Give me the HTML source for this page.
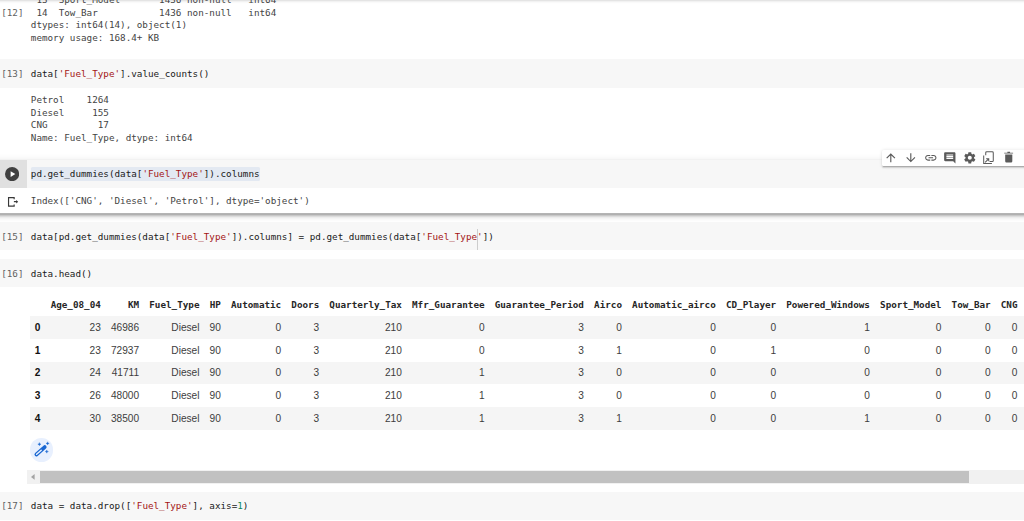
<!DOCTYPE html>
<html lang="en">
<head>
<meta charset="utf-8">
<title>Colab notebook</title>
<style>
html,body{margin:0;padding:0;}
body{width:1024px;height:521px;overflow:hidden;background:#fff;position:relative;
  font-family:"DejaVu Sans Mono","Liberation Mono",monospace;font-size:9.28px;line-height:13px;color:#212121;}
.abs{position:absolute;}
.l{position:absolute;left:30.8px;white-space:pre;color:#444;height:13px;}
.codebg{position:absolute;left:0;width:1024px;height:28.6px;background:#f7f7f7;}
.num{position:absolute;left:1.2px;color:#616161;white-space:pre;}
.code{position:absolute;left:30.8px;white-space:pre;color:#1a1a1a;}
.out{position:absolute;left:30.8px;color:#2a2a2a;}
.s{color:#a31515;}
.n{color:#09885a;}
.topshadow{position:absolute;left:0;top:0;width:1024px;height:4px;background:linear-gradient(to bottom,rgb(228,228,228) .5px,rgb(242,242,242) 1.5px,rgb(250,250,250) 2.5px,rgb(254,254,254) 3.5px,#fff 4px);}
/* focused cell */
.focus{position:absolute;left:0;top:160px;width:1024px;height:53px;}
.focusbg{position:absolute;left:0;top:160px;width:1024px;height:53px;background:#fff;}
.fsb{position:absolute;left:0;top:213px;width:1024px;height:10px;background:linear-gradient(to bottom,rgb(180,180,180) 0.5px,rgb(176,176,176) 1.5px,rgb(200,200,200) 2.5px,rgb(220,220,220) 3.5px,rgb(236,236,236) 4.5px,rgb(244,244,244) 5.5px,rgb(249,249,249) 6.5px,rgb(252,252,252) 7.5px,rgb(254,254,254) 8.5px,rgb(255,255,255) 9.5px);}
.fst{position:absolute;left:0;top:153px;width:1024px;height:7px;background:linear-gradient(to bottom,rgb(255,255,255) 0.5px,rgb(254,254,254) 1.5px,rgb(253,253,253) 2.5px,rgb(252,252,252) 3.5px,rgb(250,250,250) 4.5px,rgb(248,248,248) 5.5px,rgb(242,242,242) 6.5px);}
.gutter{position:absolute;left:0;top:0;width:26.7px;height:27.6px;background:#e0e0e0;}
.fcode{position:absolute;left:26.7px;top:0;right:0;height:27.6px;background:#f7f7f7;}
.sel{position:absolute;left:30.9px;top:7.3px;width:228.7px;height:13.4px;background:#e3e9f2;border-radius:1.5px;}
.toolbar{position:absolute;left:882px;top:149.5px;width:176px;height:16.2px;background:#fff;border-radius:1.6px;
  box-shadow:0 1.45px 1.45px rgba(0,0,0,.12),0 2.2px .7px -1.45px rgba(0,0,0,.16),0 .7px 3.6px rgba(0,0,0,.11);}
.toolbar svg{position:absolute;top:1.3px;width:13.6px;height:13.6px;fill:#5a5a5a;}
/* table */
table{position:absolute;left:29.8px;top:293.6px;border-collapse:collapse;border-spacing:0;}
th,td{padding:5.05px 5.07px;text-align:right;white-space:nowrap;line-height:12.6px;}
thead th{font-family:"DejaVu Sans Mono","Liberation Mono",monospace;font-weight:bold;font-size:9.28px;color:#262626;}
tbody th{font-family:"Liberation Sans",sans-serif;font-weight:bold;font-size:10.14px;color:#111;}
td{font-family:"Liberation Sans",sans-serif;font-size:10.14px;color:#3d3d3d;}
tbody th,tbody td{padding-top:5.75px;padding-bottom:4.35px;}
tbody tr:nth-child(odd){background:#f5f5f5;}
.wand{position:absolute;left:29.9px;top:438.4px;width:23.3px;height:23.3px;border-radius:50%;background:#e8f0fe;}
.track{position:absolute;left:26.9px;top:470.4px;width:1000px;height:13.2px;background:#f1f1f1;}
.thumb{position:absolute;left:40px;top:471.3px;width:929px;height:11.4px;background:#c1c1c1;}
</style>
</head>
<body>
<div class="topshadow"></div>

<!-- cell 12 output -->
<div class="num" style="top:6px">[12]</div>
<div class="l" style="top:-7px"> 13  Sport_Model       1436 non-null   int64</div>
<div class="l" style="top:6px"> 14  Tow_Bar           1436 non-null   int64</div>
<div class="l" style="top:18px">dtypes: int64(14), object(1)</div>
<div class="l" style="top:31px">memory usage: 168.4+ KB</div>

<!-- cell 13 -->
<div class="codebg" style="top:59px"></div>
<div class="num" style="top:67px">[13]</div>
<div class="code" style="top:67px">data[<span class="s">'Fuel_Type'</span>].value_counts()</div>
<div class="l" style="top:93px">Petrol    1264</div>
<div class="l" style="top:106px">Diesel     155</div>
<div class="l" style="top:118px">CNG         17</div>
<div class="l" style="top:131px">Name: Fuel_Type, dtype: int64</div>

<!-- cell 14 focused -->
<div class="fst"></div><div class="fsb"></div><div class="focusbg"></div>
<div class="focus">
  <div class="gutter"></div>
  <div class="fcode"></div>
  <div class="sel"></div>
  <svg class="abs" style="left:5px;top:6.9px;width:14.2px;height:14.2px" viewBox="0 0 24 24"><circle cx="12" cy="12" r="12" fill="#404040"/><path d="M9.5 7v10l8-5z" fill="#fff"/></svg>
  <div class="code" style="top:7px">pd.get_dummies(data[<span class="s">'Fuel_Type'</span>]).columns</div>
  <svg class="abs" style="left:0;top:30px;width:24px;height:24px" viewBox="0 0 24 24"><path d="M14.150 9.300V7.550H8.550V16.150H14.150V14.500M13.900 11.650H17" fill="none" stroke="#383838" stroke-width="1.150"/><path d="M16.200 9.900L18.200 11.650L16.200 13.400Z" fill="#383838"/></svg>
  <div class="l" style="top:34px">Index(['CNG', 'Diesel', 'Petrol'], dtype='object')</div>
</div>
<div class="toolbar">
  <svg style="left:2.2px" viewBox="0 0 24 24"><path d="M4 12l1.41 1.41L11 7.83V20h2V7.83l5.58 5.59L20 12l-8-8-8 8z"/></svg>
  <svg style="left:21.7px" viewBox="0 0 24 24"><path d="M20 12l-1.41-1.41L13 16.17V4h-2v12.17l-5.58-5.59L4 12l8 8 8-8z"/></svg>
  <svg style="left:41.6px" viewBox="0 0 24 24"><path d="M3.9 12c0-1.71 1.39-3.1 3.1-3.1h4V7H7c-2.76 0-5 2.24-5 5s2.24 5 5 5h4v-1.9H7c-1.71 0-3.1-1.39-3.1-3.1zM8 13h8v-2H8v2zm9-6h-4v1.9h4c1.71 0 3.1 1.39 3.1 3.1s-1.39 3.1-3.1 3.1h-4V17h4c2.76 0 5-2.24 5-5s-2.240-5-5-5z"/></svg>
  <svg style="left:60.8px" viewBox="0 0 24 24"><path d="M21.99 4c0-1.1-.89-2-1.990-2H4c-1.100 0-2 .9-2 2v12c0 1.100.9 2 2 2h14l4 4-.010-18zM18 14H6v-2h12v2zm0-3H6V9h12v2zm0-3H6V6h12v2z"/></svg>
  <svg style="left:80.7px" viewBox="0 0 24 24"><path d="M19.43 12.98c.04-.32.07-.64.07-.98s-.03-.66-.07-.98l2.110-1.650c.19-.15.24-.42.12-.64l-2-3.460c-.12-.22-.39-.3-.61-.22l-2.490 1c-.52-.4-1.080-.73-1.690-.98l-.38-2.650C14.460 2.180 14.250 2 14 2h-4c-.25 0-.46.180-.49.420l-.38 2.650c-.61.250-1.170.59-1.690.98l-2.490-1c-.23-.09-.49 0-.61.220l-2 3.460c-.13.220-.07.490.12.640l2.110 1.650c-.04.320-.07.650-.07.980s.03.660.07.980l-2.110 1.650c-.19.150-.24.420-.12.640l2 3.460c.12.220.39.300.61.220l2.490-1c.52.400 1.080.730 1.690.980l.38 2.650c.03.240.24.420.49.420h4c.25 0 .46-.18.49-.42l.38-2.650c.61-.25 1.170-.59 1.690-.98l2.490 1c.23.090.49 0 .61-.22l2-3.460c.12-.22.07-.49-.12-.64l-2.110-1.650zM12 15.500c-1.930 0-3.500-1.570-3.500-3.500s1.570-3.500 3.500-3.500 3.500 1.570 3.500 3.500-1.570 3.500-3.500 3.500z"/></svg>
  <svg style="left:99.8px" viewBox="0 0 24 24"><path fill="none" stroke="#5a5a5a" stroke-width="1.8" d="M6.6 7.4V3Q6.600 1.300 8.300 1.300H18.200Q19.900 1.300 19.900 3V17Q19.900 18.700 18.200 18.700H13.400M3 8.100V22.100H17.500M5.500 20L11.700 13.800M7.300 13.600H11.900V18.200"/></svg>
  <svg style="left:118.800px;top:.8px;width:14.600px;height:14.600px" viewBox="0 0 24 24"><path d="M10.500 3h4.400v1.500h-4.400zM5.300 4.400h14.600v1.400H5.300zM6.900 7.600h11.700v11q0 2-2 2h-7.700q-2 0-2-2z"/></svg>
</div>

<!-- cell 15 -->
<div class="codebg" style="top:221.8px"></div>
<div class="num" style="top:230px">[15]</div>
<div class="code" style="top:230px">data[pd.get_dummies(data[<span class="s">'Fuel_Type'</span>]).columns] = pd.get_dummies(data[<span class="s">'Fuel_Type'</span>])</div>

<div class="abs" style="left:477px;top:229.4px;width:.9px;height:20.600px;background:#cdcdcd"></div>

<!-- cell 16 -->
<div class="codebg" style="top:258.9px"></div>
<div class="num" style="top:267px">[16]</div>
<div class="code" style="top:267px">data.head()</div>

<table>
<thead><tr><th></th><th>Age_08_04</th><th>KM</th><th>Fuel_Type</th><th>HP</th><th>Automatic</th><th>Doors</th><th>Quarterly_Tax</th><th>Mfr_Guarantee</th><th>Guarantee_Period</th><th>Airco</th><th>Automatic_airco</th><th>CD_Player</th><th>Powered_Windows</th><th>Sport_Model</th><th>Tow_Bar</th><th>CNG</th><th>Diesel</th><th>Petrol</th></tr></thead>
<tbody>
<tr><th>0</th><td>23</td><td>46986</td><td>Diesel</td><td>90</td><td>0</td><td>3</td><td>210</td><td>0</td><td>3</td><td>0</td><td>0</td><td>0</td><td>1</td><td>0</td><td>0</td><td>0</td><td>1</td><td>0</td></tr>
<tr><th>1</th><td>23</td><td>72937</td><td>Diesel</td><td>90</td><td>0</td><td>3</td><td>210</td><td>0</td><td>3</td><td>1</td><td>0</td><td>1</td><td>0</td><td>0</td><td>0</td><td>0</td><td>1</td><td>0</td></tr>
<tr><th>2</th><td>24</td><td>41711</td><td>Diesel</td><td>90</td><td>0</td><td>3</td><td>210</td><td>1</td><td>3</td><td>0</td><td>0</td><td>0</td><td>0</td><td>0</td><td>0</td><td>0</td><td>1</td><td>0</td></tr>
<tr><th>3</th><td>26</td><td>48000</td><td>Diesel</td><td>90</td><td>0</td><td>3</td><td>210</td><td>1</td><td>3</td><td>0</td><td>0</td><td>0</td><td>0</td><td>0</td><td>0</td><td>0</td><td>1</td><td>0</td></tr>
<tr><th>4</th><td>30</td><td>38500</td><td>Diesel</td><td>90</td><td>0</td><td>3</td><td>210</td><td>1</td><td>3</td><td>1</td><td>0</td><td>0</td><td>1</td><td>0</td><td>0</td><td>0</td><td>1</td><td>0</td></tr>
</tbody>
</table>

<div class="wand"></div>
<svg class="abs" style="left:29.6px;top:437.8px;width:24px;height:24px" viewBox="0 0 24 24"><path d="M6.4 16.500L14.700 9.100" stroke="#1967d2" stroke-width="3.800" stroke-linecap="round" fill="none"/><path d="M6.600 16.300L11.200 12.200" stroke="#e8f0fe" stroke-width="1.500" stroke-linecap="round" fill="none"/><path fill="#1967d2" stroke="#1967d2" stroke-width=".35" d="M9.4 4.60Q9.4 6.2 11.00 6.2Q9.4 6.2 9.4 7.80Q9.4 6.2 7.80 6.2Q9.4 6.2 9.4 4.60ZM17.6 3.80Q17.6 5.4 19.20 5.4Q17.6 5.4 17.6 7.00Q17.6 5.4 16.00 5.4Q17.6 5.4 17.6 3.80ZM16.8 11.95Q16.8 13.55 18.40 13.55Q16.8 13.55 16.8 15.15Q16.8 13.55 15.20 13.55Q16.8 13.55 16.8 11.95Z"/></svg>

<div class="track"></div>
<svg class="abs" style="left:31.200px;top:474.100px;width:3.600px;height:5.800px" viewBox="0 0 4 6" preserveAspectRatio="none"><path d="M4 0v6L0 3z" fill="#a3a3a3"/></svg>
<div class="thumb"></div>

<!-- cell 17 -->
<div class="codebg" style="top:492.1px;height:27.7px"></div>
<div class="num" style="top:499px">[17]</div>
<div class="code" style="top:499px">data = data.drop([<span class="s">'Fuel_Type'</span>], axis=<span class="n">1</span>)</div>

</body>
</html>
